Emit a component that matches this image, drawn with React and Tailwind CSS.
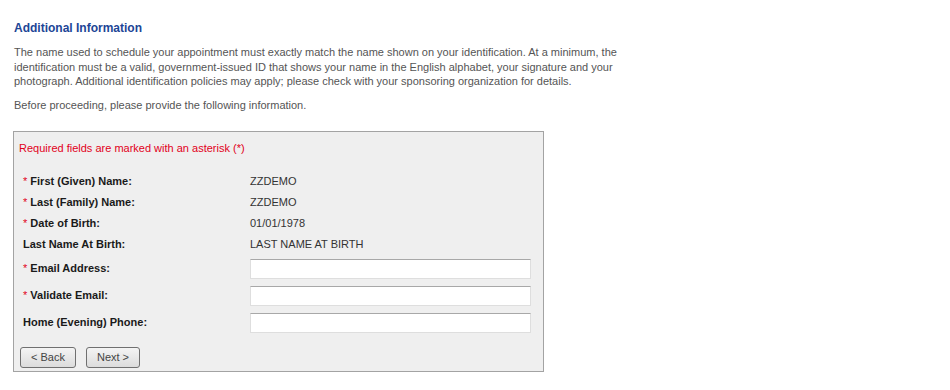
export default function App() {
  const staticRows = [
    { req: true, label: "First (Given) Name:", value: "ZZDEMO" },
    { req: true, label: "Last (Family) Name:", value: "ZZDEMO" },
    { req: true, label: "Date of Birth:", value: "01/01/1978" },
    { req: false, label: "Last Name At Birth:", value: "LAST NAME AT BIRTH" },
  ];
  const inputRows = [
    { req: true, label: "Email Address:" },
    { req: true, label: "Validate Email:" },
    { req: false, label: "Home (Evening) Phone:" },
  ];
  const Label = ({ req, label }) => (
    <div className="w-[227px] shrink-0 font-bold text-[#1a1a1a]">
      {req && <span className="text-[#e2001a] font-normal">* </span>}
      {label}
    </div>
  );
  return (
    <div className="min-h-[390px] bg-white pl-[13px] pt-[21px] font-['Liberation_Sans',Arial,sans-serif] text-[11px]">
      <h2 className="pl-[1px] text-[12px] leading-[14px] font-bold text-[#1c4596]">Additional Information</h2>
      <p className="pl-[1px] mt-[10px] w-[610px] leading-[14.5px] text-[#555555]">
        The name used to schedule your appointment must exactly match the name shown on your identification. At a minimum, the identification must be a valid, government-issued ID that shows your name in the English alphabet, your signature and your photograph. Additional identification policies may apply; please check with your sponsoring organization for details.
      </p>
      <p className="pl-[1px] mt-[9px] leading-[14.5px] text-[#555555]">
        Before proceeding, please provide the following information.
      </p>
      <div className="mt-[19px] w-[531px] border border-[#a3a3a3] bg-[#efefef] pt-[9px] pb-[3px] pl-[5px] pr-[12px]">
        <div className="leading-[14px] text-[#e2001a]">Required fields are marked with an asterisk (*)</div>
        <div className="mt-[16px] pl-[4px]">
          {staticRows.map((r) => (
            <div key={r.label} className="flex h-[21px] items-center">
              <Label req={r.req} label={r.label} />
              <div className="text-[#333333]">{r.value}</div>
            </div>
          ))}
          {inputRows.map((r) => (
            <div key={r.label} className="flex h-[27px] items-center">
              <Label req={r.req} label={r.label} />
              <input
                type="text"
                className="h-[20px] w-[281px] border border-[#dedede] border-t-[#a8a8a8] bg-white outline-none"
              />
            </div>
          ))}
        </div>
        <div className="mt-[11px] flex gap-[10px] pl-[1px]">
          <button className="h-[21px] w-[56px] rounded-[3px] border border-[#707070] bg-gradient-to-b from-[#f4f4f4] to-[#dcdcdc] text-[11px] text-[#444444]">
            &lt; Back
          </button>
          <button className="h-[21px] w-[54px] rounded-[3px] border border-[#707070] bg-gradient-to-b from-[#f4f4f4] to-[#dcdcdc] text-[11px] text-[#444444]">
            Next &gt;
          </button>
        </div>
      </div>
    </div>
  );
}
